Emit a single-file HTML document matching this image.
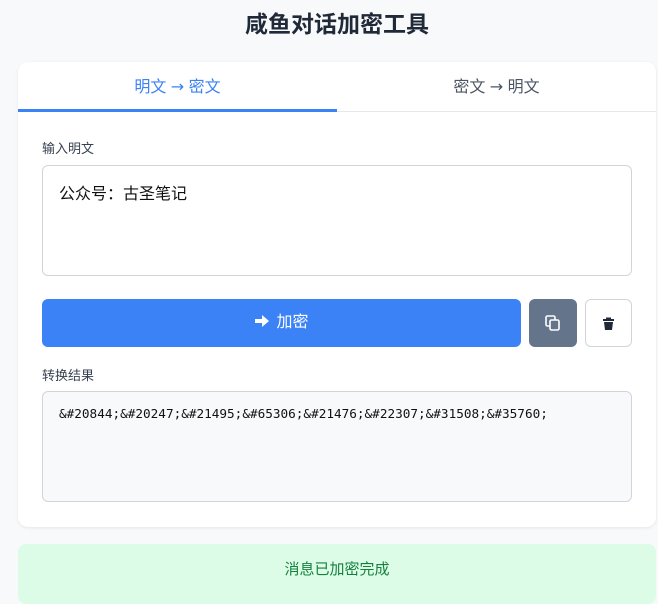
<!DOCTYPE html>
<html><head><meta charset="utf-8"><style>
*{box-sizing:border-box;margin:0;padding:0}
body{width:658px;height:591px;overflow:hidden;background:#f8f9fb;font-family:"Liberation Sans","Noto Sans CJK SC",sans-serif;color:#1f2937;position:relative}
h1{position:absolute;top:5px;left:0;width:674px;text-align:center;font-size:23px;font-weight:bold;color:#1f2937}
.card{position:absolute;left:18px;top:62px;width:638px;height:465px;background:#fff;border-radius:10px;box-shadow:0 1px 3px rgba(0,0,0,.08)}
.tabs{position:absolute;left:0;top:0;width:638px;height:50px;border-bottom:1px solid #e5e7eb}
.tab{position:absolute;top:0;height:50px;line-height:50px;text-align:center;font-size:16px;color:#4b5563}
.t1{left:0;width:319px;color:#3b82f6;border-bottom:3px solid #3b82f6}
.t2{left:319px;width:319px}
.ar{font-family:"DejaVu Sans",sans-serif;font-size:16px}
.lbl{position:absolute;left:24px;font-size:13px;color:#374151}
.ta{position:absolute;left:24px;width:590px;height:111px;border:1px solid #d1d5db;border-radius:6px;padding:14px 16px}
.in{top:103px;font-size:16px;color:#111}
.out{top:329px;background:#f8f9fb;font-family:"DejaVu Sans Mono","Liberation Mono",monospace;font-size:12.7px;color:#111;padding-top:14px;white-space:nowrap}
.btn{position:absolute;top:237px;height:48px;border-radius:6px}
.b1{left:24px;width:479px;background:#3b82f6;color:#fff;font-size:16px;text-align:center;line-height:48px}
.b2{left:511px;width:48px;background:#64748b}
.b3{left:567px;width:47px;background:#fff;border:1px solid #d1d5db}
.alert{position:absolute;left:18px;top:544px;width:638px;height:60px;background:#dcfce7;border-radius:8px;color:#15803d;font-size:15px;text-align:center;padding-top:14px}
</style></head><body>
<h1>咸鱼对话加密工具</h1>
<div class="card">
<div class="tabs"><div class="tab t1">明文 <span class="ar">→</span> 密文</div><div class="tab t2">密文 <span class="ar">→</span> 明文</div></div>
<div class="lbl" style="top:76px">输入明文</div>
<div class="ta in">公众号：古圣笔记</div>
<div class="btn b1"><svg width="16" height="14" viewBox="0 0 16 14" style="vertical-align:-1px;margin-right:6px"><path d="M1 5h7V1l7 6-7 6V9H1z" fill="#fff"/></svg>加密</div>
<div class="btn b2"><svg width="48" height="48" viewBox="0 0 48 48"><rect x="17" y="17" width="9" height="10" rx="1.5" fill="none" stroke="#fff" stroke-width="1.6"/><rect x="21" y="21" width="9" height="10" rx="1.5" fill="#64748b" stroke="#fff" stroke-width="1.6"/></svg></div>
<div class="btn b3"><svg width="45" height="46" viewBox="0 0 45 46"><rect x="17" y="19" width="11" height="2" fill="#1f2937"/><rect x="20" y="17.5" width="5" height="2" fill="#1f2937"/><path d="M18 22h9l-1 8h-7z" fill="#1f2937"/></svg></div>
<div class="lbl" style="top:303px">转换结果</div>
<div class="ta out">&amp;#20844;&amp;#20247;&amp;#21495;&amp;#65306;&amp;#21476;&amp;#22307;&amp;#31508;&amp;#35760;</div>
</div>
<div class="alert">消息已加密完成</div>
</body></html>
